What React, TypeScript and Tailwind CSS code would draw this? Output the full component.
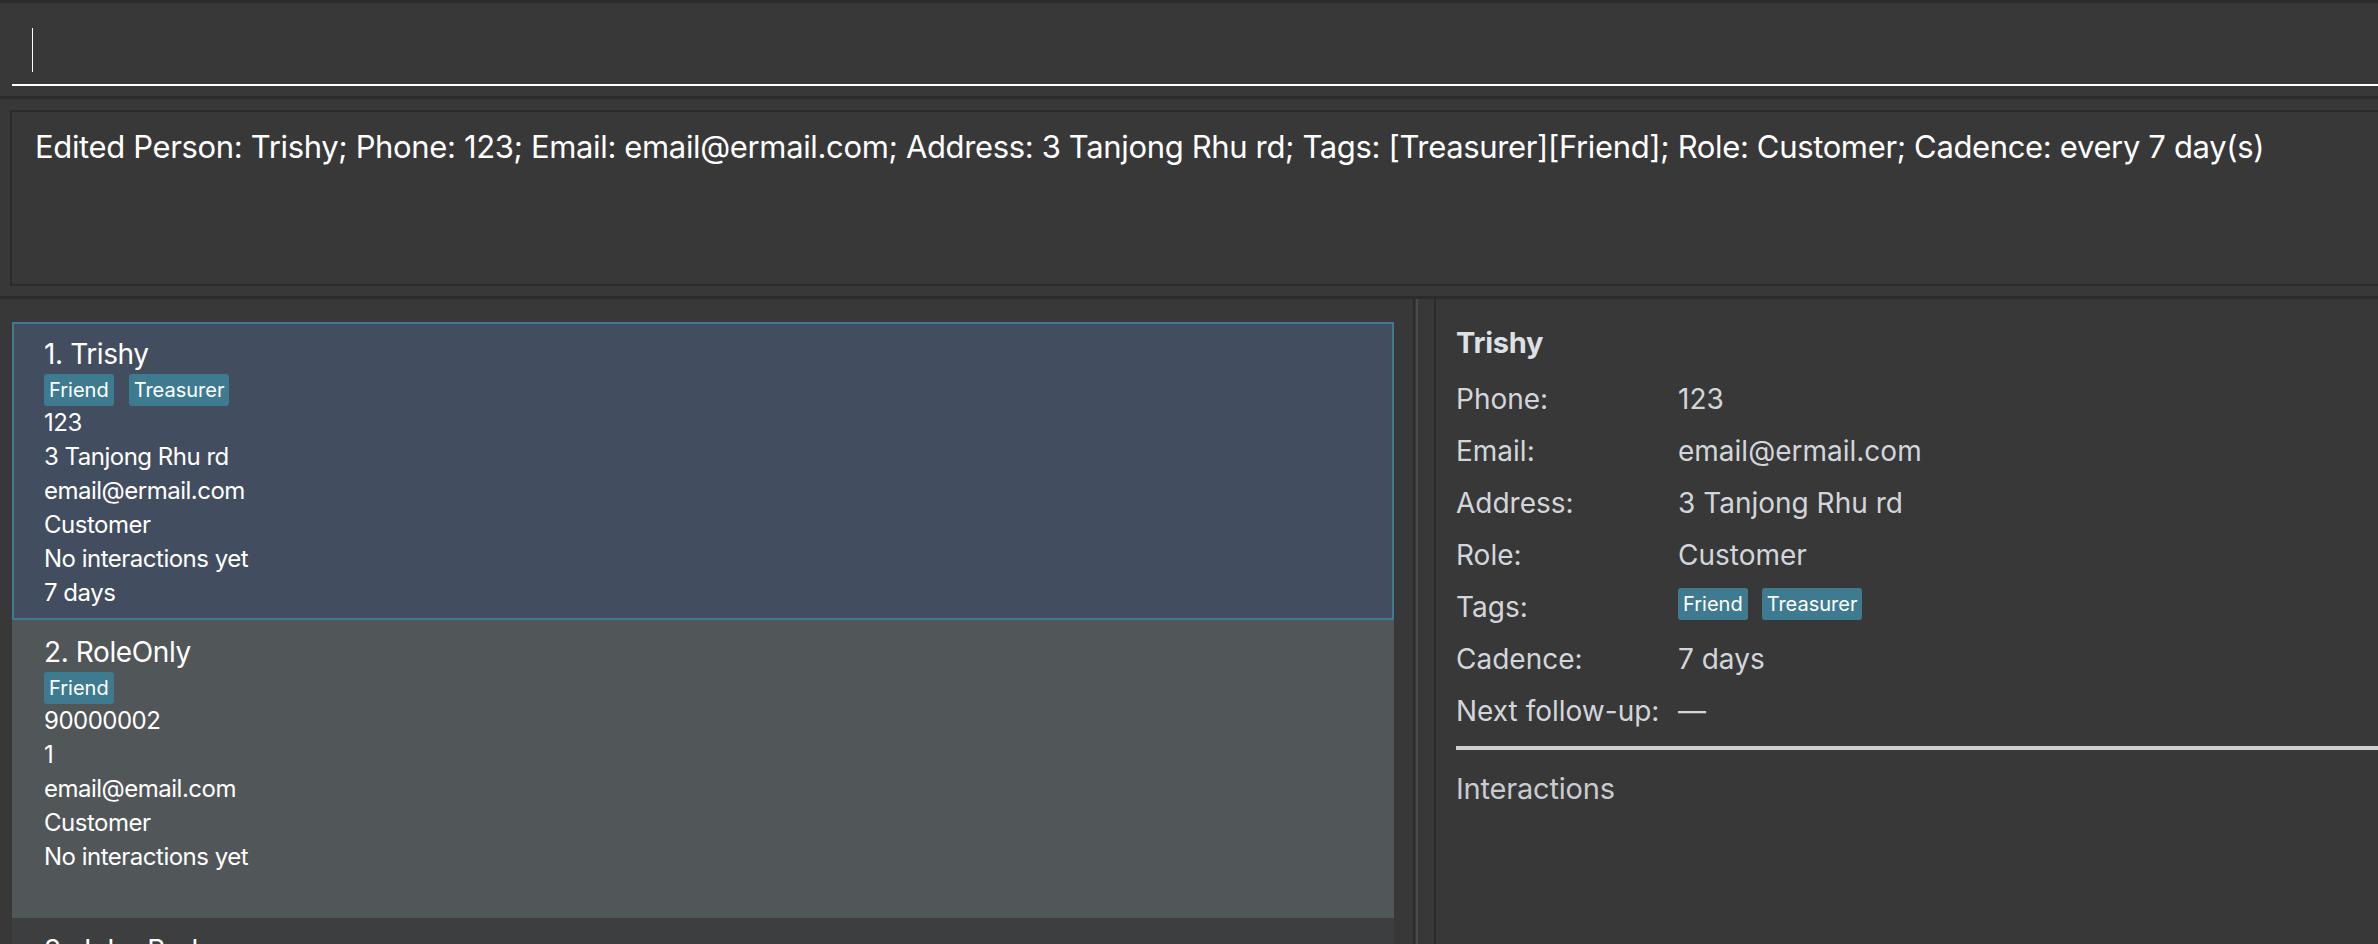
import React from 'react';

type Person = {
  name: string;
  tags: string[];
  lines: string[];
};

const people: Person[] = [
  {
    name: 'Trishy',
    tags: ['Friend', 'Treasurer'],
    lines: ['123', '3 Tanjong Rhu rd', 'email@ermail.com', 'Customer', 'No interactions yet', '7 days'],
  },
  {
    name: 'RoleOnly',
    tags: ['Friend'],
    lines: ['90000002', '1', 'email@email.com', 'Customer', 'No interactions yet'],
  },
  { name: 'John Bruh', tags: [], lines: [] },
];

const details: [string, string | string[]][] = [
  ['Phone:', '123'],
  ['Email:', 'email@ermail.com'],
  ['Address:', '3 Tanjong Rhu rd'],
  ['Role:', 'Customer'],
  ['Tags:', ['Friend', 'Treasurer']],
  ['Cadence:', '7 days'],
  ['Next follow-up:', '—'],
];

function Tag({ label }: { label: string }) {
  return (
    <span className="h-[32px] px-[5px] flex items-center rounded-[3px] bg-[#3e7b91] text-white text-[20px] leading-none">
      {label}
    </span>
  );
}

function PersonCard({ person, index }: { person: Person; index: number }) {
  const selected = index === 0;
  const bg = selected
    ? 'bg-[#424d5f] border-[#3e7b91]'
    : index % 2 === 1
      ? 'bg-[#515658] border-[#515658]'
      : 'bg-[#3c3e3f] border-[#3c3e3f]';

  return (
    <div className={`h-[298px] shrink-0 border-2 pl-[30px] pt-[13px] ${bg}`}>
      <div className="h-[34px] leading-[34px] text-[28px] tracking-[-0.4px] text-white">
        {index + 1}. {person.name}
      </div>
      {person.tags.length > 0 && (
        <div className="flex gap-[15px] mt-[3px]">
          {person.tags.map(t => (
            <Tag key={t} label={t} />
          ))}
        </div>
      )}
      {person.lines.map((l, i) => (
        <div key={i} className="h-[34px] leading-[34px] text-[24px] tracking-[-0.5px] text-white">
          {l}
        </div>
      ))}
    </div>
  );
}

export default function App() {
  return (
    <div className="w-[2378px] h-[944px] overflow-hidden bg-[#383838] text-white flex flex-col font-['Inter',sans-serif]">
      {/* command box */}
      <div className="h-[99px] shrink-0 border-y-[3px] border-[#2b2b2b] pl-3 pt-[25px]">
        <div className="ml-5 w-px h-[44px] bg-white" />
        <div className="mt-3 h-[2px] bg-white" />
      </div>

      {/* result display */}
      <div className="h-[200px] shrink-0 border-b-[3px] border-[#2b2b2b] pt-[11px] pl-[10px]">
        <div className="h-[176px] mr-[-20px] border-2 border-[#2b2b2b] pl-[23px] pt-[16px]">
          <p className="text-[31px] leading-[38px] tracking-[-0.35px] text-white whitespace-nowrap">
            Edited Person: Trishy; Phone: 123; Email: email@ermail.com; Address: 3 Tanjong Rhu rd; Tags: [Treasurer][Friend]; Role: Customer; Cadence: every 7 day(s)
          </p>
        </div>
      </div>

      {/* main split */}
      <div className="flex-1 flex min-h-0">
        <div className="w-[1413px] shrink-0 pt-[23px] pl-3 pr-[19px] flex flex-col overflow-hidden">
          {people.map((p, i) => (
            <PersonCard key={p.name} person={p} index={i} />
          ))}
        </div>

        <div className="flex shrink-0">
          <div className="w-[2px] bg-[#2b2b2b]" />
          <div className="w-px" />
          <div className="w-[2px] bg-[#4a4a4a]" />
          <div className="w-[16px]" />
          <div className="w-[2px] bg-[#2b2b2b]" />
        </div>

        <div className="flex-1 pl-5 pt-[26px] text-[#d2d6db] overflow-hidden">
          <div className="h-[36px] leading-[36px] text-[29px] tracking-[-0.3px] font-bold text-[#dde1e6]">Trishy</div>
          <div className="mt-3">
            {details.map(([label, value]) => (
              <div key={label} className="h-[52px] flex items-center text-[28px]">
                <span className="w-[222px] shrink-0">{label}</span>
                {Array.isArray(value) ? (
                  <div className="flex gap-[14px] mt-[-6px]">
                    {value.map(t => (
                      <Tag key={t} label={t} />
                    ))}
                  </div>
                ) : (
                  <span>{value}</span>
                )}
              </div>
            ))}
          </div>
          <div className="mt-[9px] h-[4px] bg-[#cfcfcf] mr-[-20px]" />
          <div className="mt-[21px] h-[36px] leading-[36px] text-[29px] tracking-[-0.2px] text-[#c9cbce]">Interactions</div>
        </div>
      </div>
    </div>
  );
}
